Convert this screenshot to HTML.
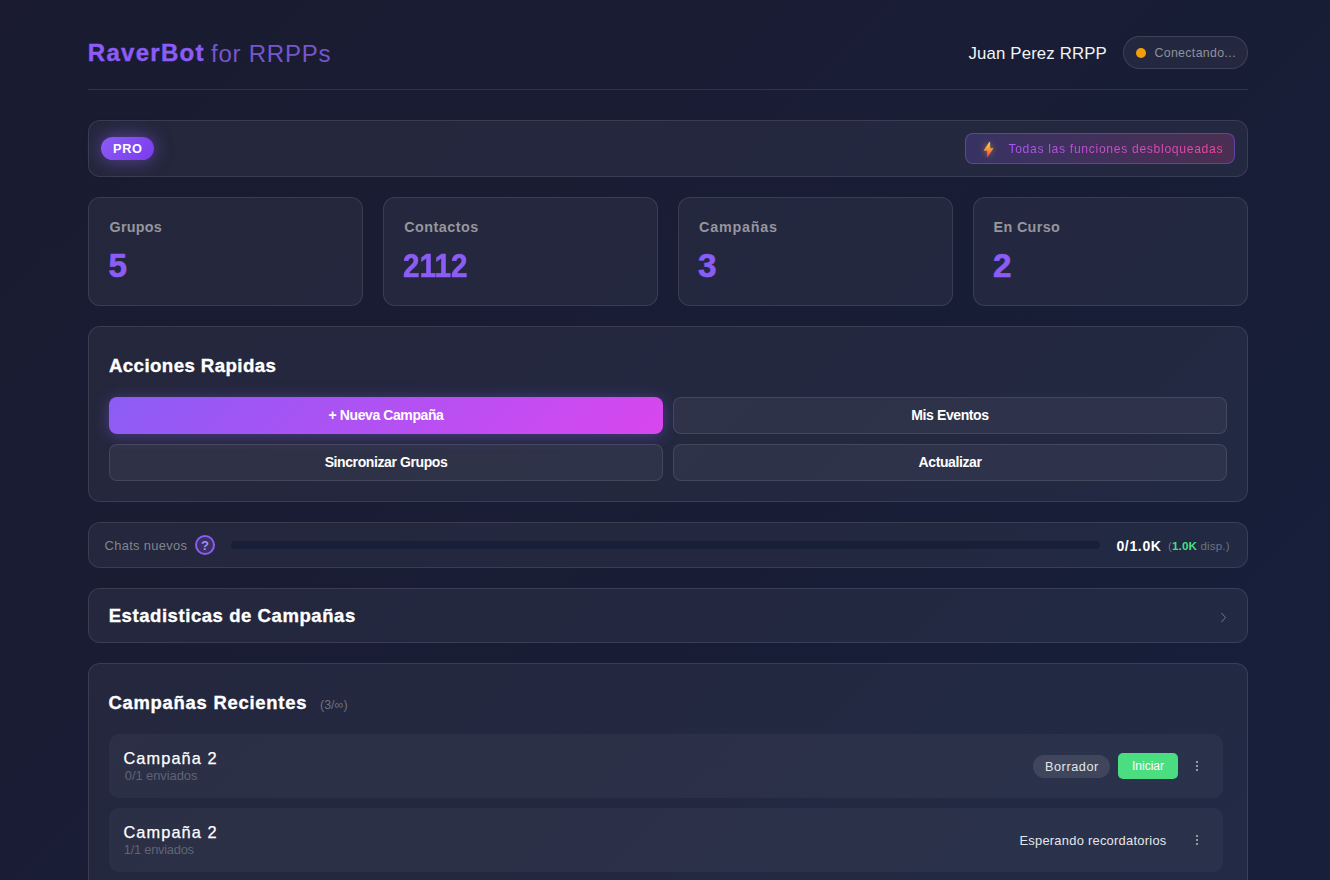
<!DOCTYPE html>
<html><head><meta charset="utf-8"><style>
html,body{margin:0;padding:0;width:1330px;height:880px;overflow:hidden;}
body{background:linear-gradient(135deg,#1a1b30 0%,#171f3b 100%);font-family:"Liberation Sans", sans-serif;position:relative;}
.t{position:absolute;white-space:nowrap;font-family:"Liberation Sans", sans-serif;}
.b{position:absolute;box-sizing:border-box;font-family:"Liberation Sans", sans-serif;}
</style></head><body>
<div class="t" style="left:87.80px;top:36.00px;font-size:24.06px;line-height:34px;font-weight:700;color:#8b5cf6;letter-spacing:1.257px;-webkit-text-stroke:0.4px #8b5cf6;">RaverBot</div>
<div class="t" style="left:211.00px;top:36.50px;font-size:24.06px;line-height:34px;font-weight:400;color:#7656cc;letter-spacing:0.75px;">for RRPPs</div>
<div class="t" style="left:968.50px;top:41.50px;font-size:16.81px;line-height:24px;font-weight:400;color:#f3f4f6;letter-spacing:0.143px;">Juan Perez RRPP</div>
<div class="b" style="left:1123px;top:36px;width:125px;height:33px;background:rgba(255,255,255,0.05);border:1px solid rgba(255,255,255,0.12);border-radius:17px;"></div>
<div class="b" style="left:1136px;top:48px;width:10px;height:10px;background:#f59e0b;border-radius:50%;"></div>
<div class="t" style="left:1154.40px;top:44.25px;font-size:12.32px;line-height:18px;font-weight:400;color:#8e929e;letter-spacing:0.375px;">Conectando...</div>
<div class="b" style="left:88px;top:89px;width:1160px;height:1px;background:rgba(255,255,255,0.1);"></div>
<div class="b" style="left:88px;top:120px;width:1160px;height:57px;background:rgba(255,255,255,0.05);border:1px solid rgba(255,255,255,0.1);border-radius:12px;"></div>
<div class="b" style="left:101px;top:137px;width:53px;height:23px;background:linear-gradient(135deg,#8b5cf6,#7c3aed);border-radius:12px;box-shadow:0 0 18px rgba(139,92,246,0.55);"></div>
<div class="t" style="left:112.90px;top:139.50px;font-size:12.75px;line-height:18px;font-weight:700;color:#fff;letter-spacing:0.75px;">PRO</div>
<div class="b" style="left:965px;top:133px;width:270px;height:31px;background:linear-gradient(90deg,rgba(139,92,246,0.2),rgba(236,72,153,0.2));border:1px solid rgba(139,92,246,0.45);border-radius:8px;"></div>
<svg class="b" style="left:975px;top:136px;filter:drop-shadow(0 0 3px rgba(251,191,36,0.45))" width="28" height="26" viewBox="0 0 28 26"><defs><linearGradient id="lg" x1="0" y1="0" x2="0" y2="1"><stop offset="0" stop-color="#fde047"/><stop offset="0.5" stop-color="#fb923c"/><stop offset="1" stop-color="#f43f5e"/></linearGradient></defs><path d="M14.6 6 L9 14.4 H12.3 L12.4 21 L18 12.4 H15 Z" fill="url(#lg)" stroke="url(#lg)" stroke-width="0.6" stroke-linejoin="round"/></svg>
<div class="t" style="left:1008.40px;top:139.50px;font-size:12.17px;line-height:18px;font-weight:400;color:#b05cf0;letter-spacing:0.672px;background:linear-gradient(90deg,#a855f7,#ec4899);-webkit-background-clip:text;background-clip:text;color:transparent;">Todas las funciones desbloqueadas</div>
<div class="b" style="left:88px;top:197px;width:275px;height:109px;background:rgba(255,255,255,0.05);border:1px solid rgba(255,255,255,0.1);border-radius:12px;"></div>
<div class="t" style="left:109.50px;top:217.05px;font-size:14.35px;line-height:21px;font-weight:700;color:#96969c;letter-spacing:0.24px;">Grupos</div>
<div class="t" style="left:108.50px;top:242.00px;font-size:33.33px;line-height:47px;font-weight:700;color:#8b5cf6;letter-spacing:0px;-webkit-text-stroke:0.6px #8b5cf6;">5</div>
<div class="b" style="left:383px;top:197px;width:275px;height:109px;background:rgba(255,255,255,0.05);border:1px solid rgba(255,255,255,0.1);border-radius:12px;"></div>
<div class="t" style="left:404.20px;top:217.05px;font-size:14.35px;line-height:21px;font-weight:700;color:#96969c;letter-spacing:0.5px;">Contactos</div>
<div class="t" style="left:403.00px;top:242.00px;font-size:33.33px;line-height:47px;font-weight:700;color:#8b5cf6;letter-spacing:0px;transform:scaleX(0.891);transform-origin:0 0;-webkit-text-stroke:0.6px #8b5cf6;">2112</div>
<div class="b" style="left:678px;top:197px;width:275px;height:109px;background:rgba(255,255,255,0.05);border:1px solid rgba(255,255,255,0.1);border-radius:12px;"></div>
<div class="t" style="left:699.10px;top:217.05px;font-size:14.35px;line-height:21px;font-weight:700;color:#96969c;letter-spacing:0.757px;">Campañas</div>
<div class="t" style="left:698.00px;top:242.00px;font-size:33.33px;line-height:47px;font-weight:700;color:#8b5cf6;letter-spacing:0px;-webkit-text-stroke:0.6px #8b5cf6;">3</div>
<div class="b" style="left:973px;top:197px;width:275px;height:109px;background:rgba(255,255,255,0.05);border:1px solid rgba(255,255,255,0.1);border-radius:12px;"></div>
<div class="t" style="left:993.50px;top:217.05px;font-size:14.35px;line-height:21px;font-weight:700;color:#96969c;letter-spacing:0.357px;">En Curso</div>
<div class="t" style="left:993.00px;top:242.00px;font-size:33.33px;line-height:47px;font-weight:700;color:#8b5cf6;letter-spacing:0px;-webkit-text-stroke:0.6px #8b5cf6;">2</div>
<div class="b" style="left:88px;top:326px;width:1160px;height:176px;background:rgba(255,255,255,0.05);border:1px solid rgba(255,255,255,0.1);border-radius:12px;"></div>
<div class="t" style="left:108.90px;top:351.85px;font-size:18.7px;line-height:27px;font-weight:700;color:#fff;letter-spacing:0.407px;-webkit-text-stroke:0.35px #fff;">Acciones Rapidas</div>
<div class="b" style="left:109px;top:397px;width:554px;height:37px;border-radius:8px;display:flex;align-items:center;justify-content:center;font-size:14px;letter-spacing:-0.4px;font-weight:700;color:#fff;padding-bottom:2px;background:linear-gradient(135deg,#8b5cf6,#d946ef);box-shadow:0 2px 15px rgba(139,92,246,0.38);">+ Nueva Campaña</div>
<div class="b" style="left:673px;top:397px;width:554px;height:37px;border-radius:8px;display:flex;align-items:center;justify-content:center;font-size:14px;letter-spacing:-0.4px;font-weight:700;color:#fff;padding-bottom:2px;background:rgba(255,255,255,0.05);border:1px solid rgba(255,255,255,0.1);">Mis Eventos</div>
<div class="b" style="left:109px;top:444px;width:554px;height:37px;border-radius:8px;display:flex;align-items:center;justify-content:center;font-size:14px;letter-spacing:-0.4px;font-weight:700;color:#fff;padding-bottom:2px;background:rgba(255,255,255,0.05);border:1px solid rgba(255,255,255,0.1);">Sincronizar Grupos</div>
<div class="b" style="left:673px;top:444px;width:554px;height:37px;border-radius:8px;display:flex;align-items:center;justify-content:center;font-size:14px;letter-spacing:-0.4px;font-weight:700;color:#fff;padding-bottom:2px;background:rgba(255,255,255,0.05);border:1px solid rgba(255,255,255,0.1);">Actualizar</div>
<div class="b" style="left:88px;top:522px;width:1160px;height:46px;background:rgba(255,255,255,0.05);border:1px solid rgba(255,255,255,0.1);border-radius:12px;"></div>
<div class="t" style="left:104.60px;top:535.95px;font-size:12.9px;line-height:19px;font-weight:400;color:#82858e;letter-spacing:0.318px;">Chats nuevos</div>
<div class="b" style="left:195px;top:535px;width:20px;height:20px;border:2px solid #8b5cf6;background:rgba(139,92,246,0.2);border-radius:50%;display:flex;align-items:center;justify-content:center;color:#a78bfa;font-size:13px;font-weight:700;">?</div>
<div class="b" style="left:231px;top:541px;width:869px;height:8px;background:#172038;border-radius:4px;"></div>
<div class="t" style="left:1116.40px;top:535.65px;font-size:14.06px;line-height:20px;font-weight:700;color:#fff;letter-spacing:0.64px;">0/1.0K</div>
<div class="t" style="left:1168px;top:537.10px;font-size:11.6px;line-height:17px;font-weight:400;color:#6b7280;letter-spacing:0.15px;">(<span style="color:#4ade80;font-weight:700">1.0K</span> disp.)</div>
<div class="b" style="left:88px;top:588px;width:1160px;height:55px;background:rgba(255,255,255,0.05);border:1px solid rgba(255,255,255,0.1);border-radius:12px;"></div>
<div class="t" style="left:108.70px;top:602.60px;font-size:18.55px;line-height:26px;font-weight:700;color:#fff;letter-spacing:0.552px;-webkit-text-stroke:0.35px #fff;">Estadisticas de Campañas</div>
<svg class="b" style="left:1219px;top:611px" width="9" height="13" viewBox="0 0 9 13"><path d="M2.5 2 L6.5 6.5 L2.5 11" stroke="#737782" stroke-width="1" fill="none"/></svg>
<div class="b" style="left:88px;top:663px;width:1160px;height:277px;background:rgba(255,255,255,0.05);border:1px solid rgba(255,255,255,0.1);border-radius:12px;"></div>
<div class="t" style="left:108.40px;top:689.65px;font-size:18.41px;line-height:26px;font-weight:700;color:#fff;letter-spacing:0.759px;-webkit-text-stroke:0.35px #fff;">Campañas Recientes</div>
<div class="t" style="left:320px;top:695.91px;font-size:12.5px;line-height:18px;font-weight:400;color:#6b7280;letter-spacing:0px;">(3/∞)</div>
<div class="b" style="left:109px;top:734px;width:1114px;height:64px;background:rgba(255,255,255,0.04);border-radius:10px;"></div>
<div class="b" style="left:1196.3px;top:760.9px;width:2px;height:2px;background:#98989c;"></div>
<div class="b" style="left:1196.3px;top:765px;width:2px;height:2px;background:#98989c;"></div>
<div class="b" style="left:1196.3px;top:769px;width:2px;height:2px;background:#98989c;"></div>
<div class="b" style="left:109px;top:808px;width:1114px;height:64px;background:rgba(255,255,255,0.04);border-radius:10px;"></div>
<div class="b" style="left:1196.3px;top:834.9px;width:2px;height:2px;background:#98989c;"></div>
<div class="b" style="left:1196.3px;top:839px;width:2px;height:2px;background:#98989c;"></div>
<div class="b" style="left:1196.3px;top:843px;width:2px;height:2px;background:#98989c;"></div>
<div class="t" style="left:123.40px;top:746.75px;font-size:16.38px;line-height:23px;font-weight:400;color:#fff;letter-spacing:1.088px;-webkit-text-stroke:0.25px #fff;">Campaña 2</div>
<div class="t" style="left:123.40px;top:820.80px;font-size:16.38px;line-height:23px;font-weight:400;color:#fff;letter-spacing:1.088px;-webkit-text-stroke:0.25px #fff;">Campaña 2</div>
<div class="t" style="left:124.80px;top:766.05px;font-size:12.9px;line-height:19px;font-weight:400;color:#5f6474;letter-spacing:-0.045px;">0/1 enviados</div>
<div class="t" style="left:123.80px;top:839.95px;font-size:12.9px;line-height:19px;font-weight:400;color:#5f6474;letter-spacing:-0.264px;">1/1 enviados</div>
<div class="b" style="left:1033px;top:755px;width:77px;height:23px;background:rgba(255,255,255,0.1);border-radius:12px;"></div>
<div class="t" style="left:1045.00px;top:758.15px;font-size:12.61px;line-height:18px;font-weight:400;color:#e5e7eb;letter-spacing:0.6px;">Borrador</div>
<div class="b" style="left:1118px;top:753px;width:60px;height:26px;background:#4ade80;border-radius:5px;display:flex;align-items:center;justify-content:center;font-size:12px;color:#fff;">Iniciar</div>
<div class="t" style="left:1019.40px;top:831.05px;font-size:12.9px;line-height:19px;font-weight:400;color:#e5e7eb;letter-spacing:0.259px;">Esperando recordatorios</div>
</body></html>
